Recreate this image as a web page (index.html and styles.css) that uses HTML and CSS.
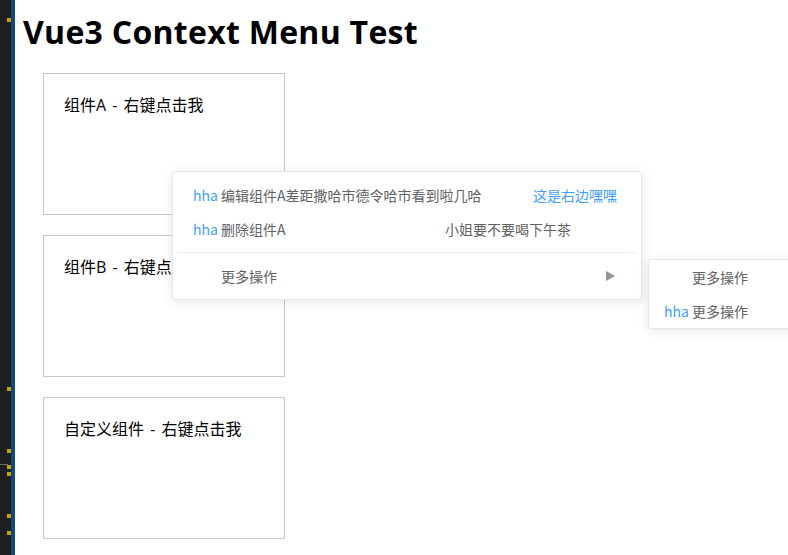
FILE: index.html
```html
<!DOCTYPE html>
<html lang="zh-CN">
<head>
    <meta charset="UTF-8">
    <meta name="viewport" content="width=device-width, initial-scale=1.0">
    <title>Vue3 Context Menu Test</title>
    <link rel="stylesheet" href="styles.css">
</head>
<body>
    <div class="page">
        <!-- editor gutter -->
        <div class="gutter">
            <div class="marks">
                <span class="mark m1"></span>
                <span class="mark m2"></span>
                <span class="mark m3"></span>
                <span class="rule"></span>
                <span class="mark m4"></span>
                <span class="mark m5"></span>
                <span class="mark m6"></span>
                <span class="mark m7"></span>
            </div>
            <div class="stripe"></div>
        </div>

        <div class="app">
            <h1>Vue3 Context Menu Test</h1>

            <div class="boxes">
                <div class="box">组件A - 右键点击我</div>
                <div class="box">组件B - 右键点击我</div>
                <div class="box">自定义组件 - 右键点击我</div>
            </div>

            <!-- Context menu -->
            <div class="menu">
                <div class="menu-item">
                    <span class="icon">hha</span>
                    <span class="label">编辑组件A差距撒哈市德令哈市看到啦几哈</span>
                    <span class="extra blue">这是右边嘿嘿</span>
                </div>
                <div class="menu-item">
                    <span class="icon">hha</span>
                    <span class="label">删除组件A</span>
                    <span class="extra shift">小姐要不要喝下午茶</span>
                </div>
                <div class="divider"></div>
                <div class="menu-item">
                    <span class="icon"></span>
                    <span class="label">更多操作</span>
                    <span class="arrow"></span>
                </div>
            </div>

            <div class="menu submenu">
                <div class="menu-item">
                    <span class="icon"></span>
                    <span class="label">更多操作</span>
                </div>
                <div class="menu-item">
                    <span class="icon">hha</span>
                    <span class="label">更多操作</span>
                </div>
            </div>
        </div>
    </div>
</body>
</html>
```

FILE: styles.css
```css
/* Reset */
* {
    margin: 0;
    padding: 0;
    box-sizing: border-box;
}

body {
    font-family: 'Open Sans', 'Noto Sans CJK SC', sans-serif;
    background-color: #fff;
    color: #000;
    overflow: hidden;
}

.page {
    display: flex;
    min-height: 555px;
}

/* Gutter */
.gutter {
    display: flex;
    flex-shrink: 0;
}

.marks {
    width: 11px;
    background-color: #1e1e1e;
    display: flex;
    flex-direction: column;
    align-items: flex-end;
}

.mark {
    display: block;
    width: 4px;
    height: 4px;
    background-color: #c9a100;
}

.m1 { margin-top: 18px; }
.m2 { margin-top: 365px; }
.m3 { margin-top: 58px; }
.rule {
    display: block;
    align-self: flex-start;
    width: 8px;
    height: 1px;
    margin-top: 11px;
    background-color: #6a6a6a;
}
.m4 { margin-top: 0; }
.m5 { margin-top: 3px; }
.m6 { margin-top: 38px; }
.m7 { margin-top: 13px; }

.stripe {
    width: 4px;
    background-color: #0e4a7b;
}

/* App */
.app {
    position: relative;
    flex: 1;
    padding: 0 8px;
}

h1 {
    font-size: 32px;
    font-weight: 700;
    line-height: 40px;
    letter-spacing: 0.28px;
    padding-top: 12px;
}

.boxes {
    margin-top: 21px;
    padding-left: 20px;
}

.box {
    width: 242px;
    height: 142px;
    border: 1px solid #c8c8c8;
    padding: 20px;
    font-size: 16px;
    line-height: 22px;
    word-spacing: 2px;
    margin-bottom: 20px;
}

/* Context menu */
.menu {
    position: absolute;
    left: 157px;
    top: 171px;
    width: 470px;
    background: #fff;
    border: 1px solid #e4e7ed;
    border-radius: 4px;
    box-shadow: 0 2px 12px rgba(0, 0, 0, 0.1);
    padding: 6px 0;
    font-family: 'Noto Sans CJK SC', sans-serif;
    font-size: 14px;
    color: #606266;
}

.menu-item {
    display: flex;
    align-items: center;
    height: 34px;
    padding: 0 24px 0 20px;
}

.menu-item .icon {
    width: 28px;
    flex-shrink: 0;
    color: #409eff;
}

.menu-item .label {
    flex: 1;
}

.menu-item .extra.blue {
    color: #409eff;
}

.menu-item .extra.shift {
    margin-right: 46px;
}

.menu-item .arrow {
    width: 0;
    height: 0;
    border-left: 9px solid #909399;
    border-top: 5px solid transparent;
    border-bottom: 5px solid transparent;
    margin-right: 2px;
}

.divider {
    height: 1px;
    background: #ebeef5;
    margin: 6px 4px;
}

.submenu {
    left: 633px;
    top: 259px;
    width: 160px;
    padding: 0;
}

.submenu .menu-item {
    padding-left: 15px;
}
```
